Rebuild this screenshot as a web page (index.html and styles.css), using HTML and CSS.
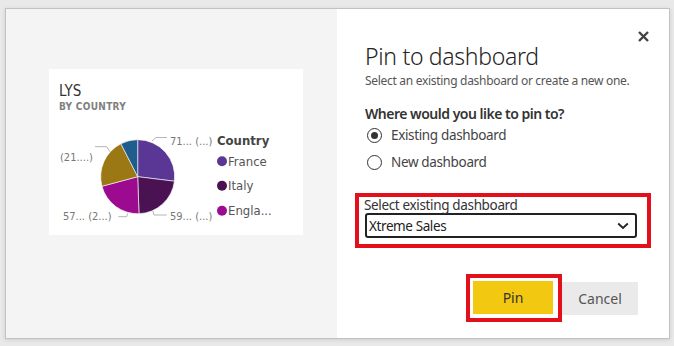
FILE: index.html
```html
<!DOCTYPE html>
<html>
<head>
<meta charset="utf-8">
<link rel="stylesheet" href="styles.css">
</head>
<body>
<div class="backdrop">
  <div class="dialog">
    <div class="preview">
      <div class="card">
        <div class="card-title">LYS</div>
        <div class="card-sub">BY COUNTRY</div>
        <svg class="chart" width="254" height="116" viewBox="0 0 254 116">
          <g stroke="#fff" stroke-width="0.6">
            <path d="M88.7 57.7 L88.7 20.7 A37 37 0 0 1 125.42 62.21 Z" fill="#5b3795"/>
            <path d="M88.7 57.7 L125.42 62.21 A37 37 0 0 1 89.99 94.68 Z" fill="#4a1253"/>
            <path d="M88.7 57.7 L89.99 94.68 A37 37 0 0 1 52.96 67.28 Z" fill="#9c0b8f"/>
            <path d="M88.7 57.7 L52.96 67.28 A37 37 0 0 1 71.90 24.73 Z" fill="#9b7813"/>
            <path d="M88.7 57.7 L71.90 24.73 A37 37 0 0 1 88.7 20.7 Z" fill="#1e5d8c"/>
          </g>
          <g fill="none" stroke="#b5b5b5" stroke-width="1">
            <polyline points="103,22 107,18.5 118,18.5"/>
            <polyline points="46,27.7 57.7,27.7 61,32.7"/>
            <polyline points="69.3,97.7 77.7,97.7 78.7,94.3"/>
            <polyline points="103.7,91.7 105,96 117.7,96"/>
          </g>
          <g class="lbl">
            <text x="121" y="26">71... (...)</text>
            <text x="11" y="42">(21....)</text>
            <text x="14" y="101">57... (2...)</text>
            <text x="121" y="101">59... (...)</text>
          </g>
          <text class="leg-title" x="168" y="26">Country</text>
          <circle cx="173" cy="42.3" r="5" fill="#5b3795"/>
          <circle cx="173" cy="66.7" r="5" fill="#4a1253"/>
          <circle cx="173" cy="91.7" r="5" fill="#9c0b8f"/>
          <g class="leg">
            <text x="179" y="47">France</text>
            <text x="179" y="71">Italy</text>
            <text x="179" y="96">Engla...</text>
          </g>
        </svg>
      </div>
    </div>
    <div class="panel">
      <button class="close" aria-label="Close">
        <svg width="11" height="11" viewBox="0 0 11 11"><path d="M1 1 L10 10 M10 1 L1 10" stroke="#444" stroke-width="2.4" stroke-linecap="butt"/></svg>
      </button>
      <h1 class="title">Pin to dashboard</h1>
      <p class="subtitle">Select an existing dashboard or create a new one.</p>
      <p class="question">Where would you like to pin to?</p>
      <div class="radios">
        <label class="radio"><span class="dot checked"></span>Existing dashboard</label>
        <label class="radio"><span class="dot"></span>New dashboard</label>
      </div>
      <div class="highlight select-wrap">
        <div class="select-label">Select existing dashboard</div>
        <div class="select">
          <span>Xtreme Sales</span>
          <svg width="12" height="8" viewBox="0 0 12 8"><path d="M1.2 1.5 L6 6 L10.8 1.5" fill="none" stroke="#222" stroke-width="1.8"/></svg>
        </div>
      </div>
      <div class="actions">
        <div class="highlight pin-wrap"><button class="btn pin">Pin</button></div>
        <button class="btn cancel">Cancel</button>
      </div>
    </div>
  </div>
</div>
</body>
</html>
```
FILE: styles.css
```css
* { box-sizing: border-box; }
html, body { margin: 0; padding: 0; }
body {
  width: 674px;
  height: 346px;
  overflow: hidden;
  background: #e9e9e9;
  font-family: "Noto Sans", "Open Sans", sans-serif;
}
.backdrop {
  padding: 8px 0 0 5px;
}
.dialog {
  width: 665px;
  height: 331px;
  border: 1px solid #c2c2c2;
  display: flex;
  box-shadow: 0 1px 4px rgba(0,0,0,0.12);
}
.preview {
  flex: 0 0 331px;
  width: 331px;
  background: #f4f4f4;
  padding: 60px 0 0 43px;
}
.card {
  width: 254px;
  height: 166px;
  background: #fff;
  padding-top: 13px;
}
.card-title {
  font-family: "DejaVu Sans Condensed", "Liberation Sans", sans-serif;
  font-size: 15px;
  line-height: 18px;
  color: #333;
  padding-left: 10px;
}
.card-sub {
  font-family: "DejaVu Sans Condensed", "Liberation Sans", sans-serif;
  font-size: 10px;
  line-height: 14px;
  letter-spacing: 0.3px;
  font-weight: bold;
  color: #808080;
  padding-left: 10px;
  height: 19px;
}
.chart { display: block; }
.lbl text {
  font-family: "DejaVu Sans Condensed", "Liberation Sans", sans-serif;
  font-size: 11px;
  fill: #777;
}
.leg-title {
  font-family: "DejaVu Sans Condensed", "Liberation Sans", sans-serif;
  font-size: 13px;
  font-weight: bold;
  fill: #444;
}
.leg text {
  font-family: "DejaVu Sans Condensed", "Liberation Sans", sans-serif;
  font-size: 13px;
  fill: #555;
}
.panel {
  flex: 1;
  min-width: 0;
  background: #fff;
  position: relative;
  padding: 31px 29px 0 28px;
}
.close {
  position: absolute;
  top: 22px;
  right: 20px;
  width: 11px;
  height: 11px;
  padding: 0;
  border: 0;
  background: none;
}
.close svg { display: block; }
.title {
  margin: 0;
  font-size: 23px;
  font-weight: 300;
  line-height: 32px;
  color: #252423;
  letter-spacing: -0.3px;
}
.subtitle {
  margin: 1px 0 0;
  font-size: 12px;
  line-height: 16px;
  color: #555;
  letter-spacing: -0.3px;
}
.question {
  margin: 15px 0 0;
  font-size: 14px;
  font-weight: 600;
  line-height: 20px;
  color: #333;
  letter-spacing: -0.5px;
}
.radios {
  display: flex;
  flex-direction: column;
  gap: 7px;
  margin-top: 1px;
}
.radio {
  display: flex;
  align-items: center;
  gap: 9px;
  font-size: 13.5px;
  line-height: 20px;
  color: #444;
  letter-spacing: -0.35px;
  padding-left: 2px;
}
.dot {
  width: 15px;
  height: 15px;
  border: 1.5px solid #333;
  border-radius: 50%;
  display: flex;
  align-items: center;
  justify-content: center;
}
.dot.checked::after {
  content: "";
  width: 7px;
  height: 7px;
  border-radius: 50%;
  background: #333;
}
.highlight {
  border: 4px solid #e3101c;
}
.select-wrap {
  margin: 21px 0 0 -10px;
  width: 296px;
  padding: 0 10px 6px 5px;
}
.select-label {
  font-size: 13.5px;
  line-height: 16px;
  color: #333;
  letter-spacing: -0.35px;
}
.select {
  margin-left: 1px;
  height: 25px;
  border: 2px solid #222;
  border-radius: 3px;
  display: flex;
  align-items: center;
  justify-content: space-between;
  padding: 0 6px 0 2px;
  font-size: 13.5px;
  letter-spacing: -0.4px;
  color: #222;
}
.actions {
  display: flex;
  align-items: flex-start;
  margin: 26px 0 0 101px;
}
.pin-wrap {
  padding: 3px 5px 4px 3px;
}
.btn {
  border: 0;
  font-family: inherit;
  font-size: 14px;
  height: 33px;
  padding: 0;
}
.pin {
  width: 80px;
  background: #f2c811;
  color: #333;
}
.cancel {
  margin-top: 8px;
  width: 76px;
  background: #eaeaea;
  color: #555;
}
```
